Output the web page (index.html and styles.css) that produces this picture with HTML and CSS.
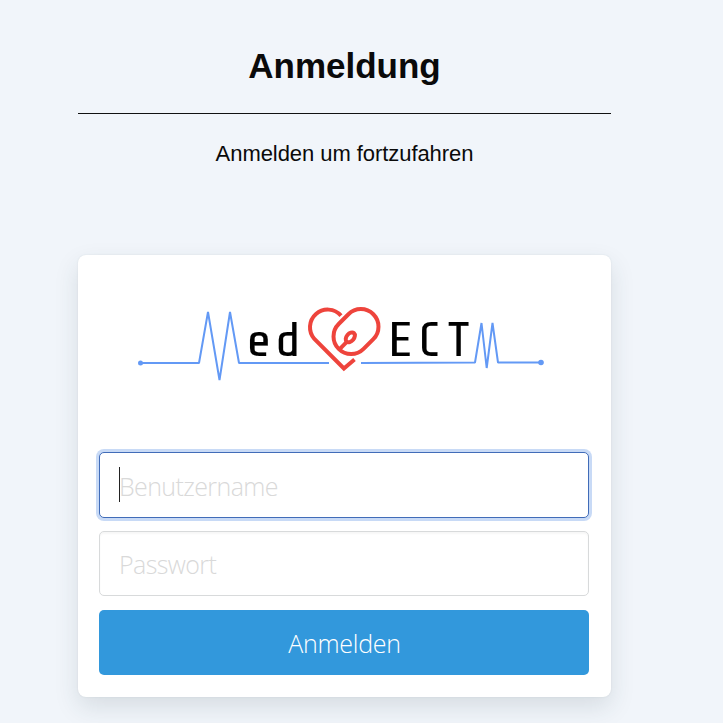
FILE: index.html
```html
<!DOCTYPE html>
<html lang="de">
<head>
<meta charset="utf-8">
<title>Anmeldung</title>
<link rel="stylesheet" href="styles.css">
</head>
<body>
<main class="page">
  <h1 class="title">Anmeldung</h1>
  <p class="subtitle">Anmelden um fortzufahren</p>
  <form class="card">
    <svg class="logo" viewBox="130 295 430 95" role="img" aria-label="MedECT">
      <g class="pulse">
        <path d="M140.500 363H199L208 312L219.500 380L230 312L239 363H329"/>
        <path d="M361 363L475 362.500L481.500 323L486.700 368L492.500 323L498 362.500H541"/>
      </g>
      <circle class="dot" cx="140.500" cy="363" r="2.500"/>
      <circle class="dot" cx="541" cy="362.500" r="2.800"/>
      <g class="letters">
        <text transform="translate(246.300 356) scale(1.12 1)">e</text>
        <text transform="translate(275.300 356) scale(1.050 .99)">d</text>
        <text transform="translate(387.500 356) scale(1.120 1)">E</text>
        <text transform="translate(418.300 356) scale(1.060 1)">C</text>
        <text transform="translate(447.900 356) scale(1.040 1)">T</text>
      </g>
      <g class="heart">
        <path d="M341 315.600A17.400 17.400 0 0 0 314.400 339L343.900 368.500L354.500 359.500"/>
        <rect x="-24.500" y="-17.600" width="49" height="35.200" rx="17.600" transform="translate(356 331.600) rotate(-45)"/>
        <ellipse cx="350.300" cy="337.400" rx="5.600" ry="3.700" transform="rotate(-50 350.300 337.400)"/>
        <path d="M346.800 341.800L338.900 349.800"/>
      </g>
    </svg>
    <div class="field focused">
      <input class="input" type="text" placeholder="Benutzername" aria-label="Benutzername">
      <span class="caret"></span>
    </div>
    <div class="field">
      <input class="input" type="password" placeholder="Passwort" aria-label="Passwort">
    </div>
    <button class="submit" type="button">Anmelden</button>
  </form>
</main>
</body>
</html>
```
FILE: styles.css
```css
* { box-sizing: border-box; }
body {
  margin: 0;
  height: 723px;
  overflow: hidden;
  background: #f1f5fa;
  color: #0a0a0a;
  font-family: "Liberation Sans", Arial, sans-serif;
}
.page { width: 533px; margin-left: 78px; padding-top: 45px; }
.title {
  height: 69px;
  margin: 0;
  border-bottom: 1px solid #111;
  font-size: 35px;
  line-height: 42px;
  text-align: center;
}
.subtitle {
  margin: 26px 0 0;
  height: 115px;
  font-size: 22px;
  line-height: 28px;
  letter-spacing: -.06px;
  text-align: center;
}
.card {
  display: flex;
  flex-direction: column;
  height: 442px;
  padding: 40px 22px 22px 21px;
  border-radius: 8px;
  background: #fff;
  box-shadow: 0 10px 24px rgba(40, 60, 70, .13), 0 0 2px rgba(40, 60, 70, .1);
}
.logo { width: 430px; height: 95px; margin: 0 0 62px 31px; flex: none; }
.pulse { fill: none; stroke: #6399f5; stroke-width: 2; stroke-linejoin: bevel; }
.dot { fill: #6399f5; }
.letters { fill: #000; stroke: #000; stroke-width: .1; font: 48px "Share Tech", Roboto, sans-serif; }
.heart { fill: none; stroke: #ee443c; stroke-width: 4; }
.field {
  position: relative;
  height: 65px;
  margin-bottom: 14px;
  border: 1px solid #d8dadb;
  border-radius: 5px;
  background: #fff;
  box-shadow: inset 0 2px 2px rgba(0, 0, 0, .035);
}
.focused {
  height: 66px;
  margin-bottom: 13px;
  border-color: #416cb8;
  box-shadow: 0 0 0 3px #c8daf6;
}
.input {
  width: 100%;
  height: 100%;
  padding: 1px 19px 0;
  border: 0;
  outline: 0;
  background: transparent;
  font: 300 25px "Open Sans", sans-serif;
  letter-spacing: -.6px;
}
.input::placeholder { color: #d9d9d9; opacity: 1; }
.caret {
  position: absolute;
  left: 19px;
  top: 14px;
  width: 1px;
  height: 35px;
  background: #222;
}
.submit {
  height: 65px;
  padding: 1px 0 0 1px;
  border: 0;
  border-radius: 5px;
  background: #3298dc;
  color: #fff;
  font: 300 25px "Open Sans", sans-serif;
  letter-spacing: -.25px;
}
```
